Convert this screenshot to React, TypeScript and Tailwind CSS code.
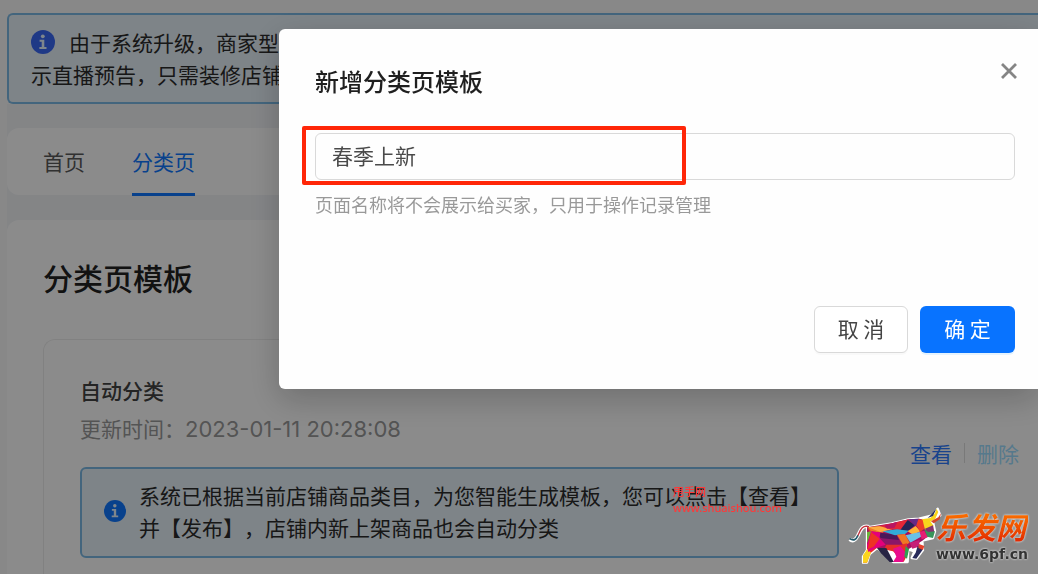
function InfoIcon({ className }: { className: string }) {
  return (
    <svg viewBox="0 0 24 24" className={className} aria-hidden="true">
      <circle cx="12" cy="12" r="12" fill="currentColor" />
      <circle cx="11.8" cy="6.3" r="1.9" fill="#e6f4ff" />
      <path d="M8.6 9.8h4.7v7.1h2.2v2H8.4v-2h2.3v-5.1H8.6z" fill="#e6f4ff" />
    </svg>
  );
}

function BullLogo() {
  return (
    <svg viewBox="0 0 300 198" className="h-[66px] w-[100px] shrink-0" aria-hidden="true">
      <g fill="#fff" stroke="#fff" strokeWidth="7" strokeLinejoin="round">
        <path d="M66 70L140 58L190 46L222 44L262 34L278 14L286 34L264 54L270 82L264 102L232 110L234 138L214 164L200 162L208 142L190 136L188 174L144 174L110 142L96 132L74 150L66 176L54 176L54 158L66 138L66 100Z" />
        <path d="M72 68C50 62 46 80 38 96C32 108 24 114 14 106" fill="none" strokeWidth="11" />
      </g>
      <path d="M72 68C50 62 46 80 38 96" fill="none" stroke="#c3323f" strokeWidth="4" />
      <path d="M39 94C33 107 26 112 14 104" fill="none" stroke="#225a6c" strokeWidth="5" />
      <path fill="#a3125f" d="M66 70L140 58L190 46L222 44L250 50L250 96L232 110L190 136L144 140L96 132L66 138Z" />
      <path fill="#ec2d2b" d="M66 70L78 92L66 138L54 158L54 176L66 176L76 148L98 130L106 106L80 80Z" />
      <path fill="#fbd51e" d="M54 154L68 134L78 146L66 176L54 176Z" />
      <path fill="#6db43c" d="M66 84L80 82L66 118Z" />
      <path fill="#ee7a25" d="M68 70L104 66L132 74L112 86L78 82Z" />
      <path fill="#e4007c" d="M78 82L112 86L104 102L122 122L92 132L70 144L66 124Z" />
      <path fill="#ee3324" d="M78 84L104 104L86 128L68 136Z" />
      <path fill="#ffab3f" d="M70 70L118 66L142 76L106 84Z" />
      <path fill="#e32637" d="M104 66L142 58L192 46L172 78L136 76Z" />
      <path fill="#b91561" d="M118 65L158 53L148 72L126 74Z" />
      <path fill="#242457" d="M188 48L210 64L188 82L166 78Z" />
      <path fill="#652a86" d="M192 46L222 44L226 62L210 66Z" />
      <path fill="#4b1759" d="M106 86L154 92L162 108L124 112L104 100Z" />
      <path fill="#31abd8" d="M112 82L156 76L192 80L180 90L150 94Z" />
      <path fill="#8b1668" d="M104 102L162 108L170 124L124 122Z" />
      <path fill="#ef7724" d="M156 92L180 90L194 116L176 126Z" />
      <path fill="#ffb436" d="M188 82L212 66L226 82L204 92Z" />
      <path fill="#68c1e8" d="M182 94L224 84L232 96L196 116Z" />
      <path fill="#e72d2a" d="M124 122L168 122L186 118L188 150L176 174L144 142L118 136Z" />
      <path fill="#e90d8b" d="M144 134L166 126L182 146L174 174L144 174L154 158Z" />
      <path fill="#272444" d="M96 132L124 132L146 174L134 174L108 148Z" />
      <path fill="#319f51" d="M182 126L192 136L186 164L178 158Z" />
      <path fill="#c51f77" d="M194 116L224 108L222 128L202 134Z" />
      <path fill="#272a5a" d="M218 126L234 136L214 164L202 162L212 146Z" />
      <path fill="#e6432c" d="M222 120L238 126L234 138L220 132Z" />
      <path fill="#ed3c27" d="M220 46L240 48L238 74L226 84L214 64Z" />
      <path fill="#f8d61d" d="M232 44L256 52L266 66L240 78Z" />
      <path fill="#84326e" d="M240 74L264 64L268 84L250 92Z" />
      <path fill="#37955b" d="M238 76L250 84L270 82L264 102L246 98Z" />
      <path fill="#e51f74" d="M224 84L238 80L248 100L230 106Z" />
      <path fill="#f9d51a" d="M230 46L256 42L270 28L274 14L280 24L270 46L248 56Z" />
      <path fill="#29305a" d="M248 42L264 36L274 14L268 20L258 32Z" />
      <path fill="#d54529" d="M258 52L280 40L288 28L284 46L266 58Z" />
    </svg>
  );
}

function NewTemplateDialog() {
  return (
    <div className="fixed inset-0 bg-black/45">
      <div
        role="dialog"
        aria-modal="true"
        aria-labelledby="dialog-title"
        className="mt-[29px] ml-[279px] rounded-l-md bg-[#fefefe] pt-[34px] pr-[23px] pb-9 pl-9 shadow-[0_10px_32px_rgba(0,0,0,0.22)]"
      >
        <div className="flex items-start justify-between">
          <h2 id="dialog-title" className="text-2xl leading-9 font-medium text-[#1f1f1f]">
            新增分类页模板
          </h2>
          <button type="button" aria-label="关闭" className="-mt-1 -mr-1.5 text-[#858585]">
            <svg viewBox="0 0 24 24" className="size-6" fill="none" stroke="currentColor" strokeWidth="2.8">
              <path d="M5 5L19 19M19 5L5 19" />
            </svg>
          </button>
        </div>
        <div className="relative mt-[34px]">
          <input
            type="text"
            aria-label="模板名称"
            defaultValue="春季上新"
            className="block h-[47px] w-full rounded-md border border-[#d9d9d9] bg-transparent px-4 pb-[3px] text-[21px] text-[#4a4a4a] outline-none"
          />
          <div className="pointer-events-none absolute -top-[7px] -left-[13px] h-[59px] w-[384px] rounded-xs border-4 border-[#ff2608]" />
        </div>
        <p className="mt-[10px] text-lg leading-7 text-[#999]">页面名称将不会展示给买家，只用于操作记录管理</p>
        <div className="mt-[88px] flex justify-end gap-3">
          <button
            type="button"
            className="h-[47px] w-[94px] rounded-md border border-[#d9d9d9] bg-white pb-[2px] text-[21px] text-[#444] shadow-[0_2px_0_rgba(0,0,0,0.02)]"
          >
            取 消
          </button>
          <button
            type="button"
            className="h-[47px] w-[95px] rounded-md bg-[#0873ff] pb-[2px] text-[21px] text-white shadow-[0_2px_0_rgba(5,145,255,0.1)]"
          >
            确 定
          </button>
        </div>
      </div>
    </div>
  );
}

export default function App() {
  return (
    <div className="relative h-screen overflow-hidden bg-[#f8f8f8] pl-[7px] font-['Noto_Sans_CJK_SC',sans-serif] text-[21px] text-[#2b2b2b]">
      <div className="flex h-full flex-col bg-[#f0f2f5]">
        <div className="bg-[#f8f8f8] pt-[13px]">
          <div className="rounded-l-md border-2 border-r-0 border-[#7ab8e4] bg-[#e6f0f8] pt-[11px] pb-3 pl-[22px] leading-8">
            <div className="flex items-center gap-[14px] whitespace-nowrap">
              <InfoIcon className="size-6 text-[#3a68f5]" />
              由于系统升级，商家型店
            </div>
            <p>示直播预告，只需装修店铺</p>
          </div>
        </div>

        <nav className="mt-6 flex gap-[47px] rounded-l-xl bg-[#fefefe] pl-9">
          <a href="#home" className="pt-[17px] pb-[18px] leading-8 text-[#595959]">
            首页
          </a>
          <a href="#category" className="-mb-px border-b-3 border-[#0f77ff] pt-[17px] pb-4 leading-8 text-[#0f77ff]">
            分类页
          </a>
        </nav>

        <main className="mt-[25px] flex flex-1 flex-col rounded-tl-xl bg-[#fefefe] pt-[35px] pl-9">
          <h1 className="text-[30px] leading-11 font-medium text-[#222]">分类页模板</h1>
          <section className="mt-10 flex-1 rounded-tl-xl border-t border-l border-[#ececec] pt-[34px] pr-[19px] pl-9">
            <h2 className="leading-8 font-medium text-[#434343]">自动分类</h2>
            <div className="flex items-start justify-between">
              <div>
                <p className="mt-[6px] leading-8 text-[#999]">
                  更新时间：
                  <time dateTime="2023-01-11T20:28:08" className="font-['Inter',sans-serif] text-[22px]">
                    2023-01-11 20:28:08
                  </time>
                </p>
                <div className="mt-[22px] flex w-[759px] items-center gap-[13px] rounded-md border-2 border-[#7ab8e4] bg-[#e6f0f8] pt-[10px] pb-[13px] pl-[22px] leading-8">
                  <InfoIcon className="size-[22px] shrink-0 text-[#0f77ff]" />
                  <p className="whitespace-nowrap [text-spacing-trim:space-all]">
                    系统已根据当前店铺商品类目，为您智能生成模板，您可以点击【查看】
                    <br />
                    并【发布】，店铺内新上架商品也会自动分类
                  </p>
                </div>
              </div>
              <div className="mt-[31px] flex items-center leading-8">
                <a href="#view" className="text-[#2f7bff]">
                  查看
                </a>
                <span className="mx-3 h-5 w-px bg-[#dcdcdc]" />
                <button type="button" disabled className="text-[#9ddcff]">
                  删除
                </button>
              </div>
            </div>
          </section>
        </main>
      </div>

      <NewTemplateDialog />

      <div className="pointer-events-none absolute top-[482px] left-[673px] text-[11px] font-medium text-[#ff3838]">
        <p className="leading-[18px]">甩手网</p>
        <p className="font-['Noto_Sans',sans-serif] leading-4">www.shuaishou.com</p>
      </div>

      <div className="pointer-events-none absolute right-[10px] bottom-1 flex items-start">
        <BullLogo />
        <div className="-ml-[9px] flex flex-col pt-1">
          <span className="bg-linear-to-b from-[#ff7a00] to-[#e01c00] bg-clip-text text-[30px] leading-9 font-bold text-transparent italic drop-shadow-[0_0_1px_#fff]">
            乐发网
          </span>
          <span className="font-['DejaVu_Sans',sans-serif] text-sm leading-5 font-bold text-[#333] drop-shadow-[0_0_1px_#fff]">
            www.6pf.cn
          </span>
        </div>
      </div>
    </div>
  );
}
